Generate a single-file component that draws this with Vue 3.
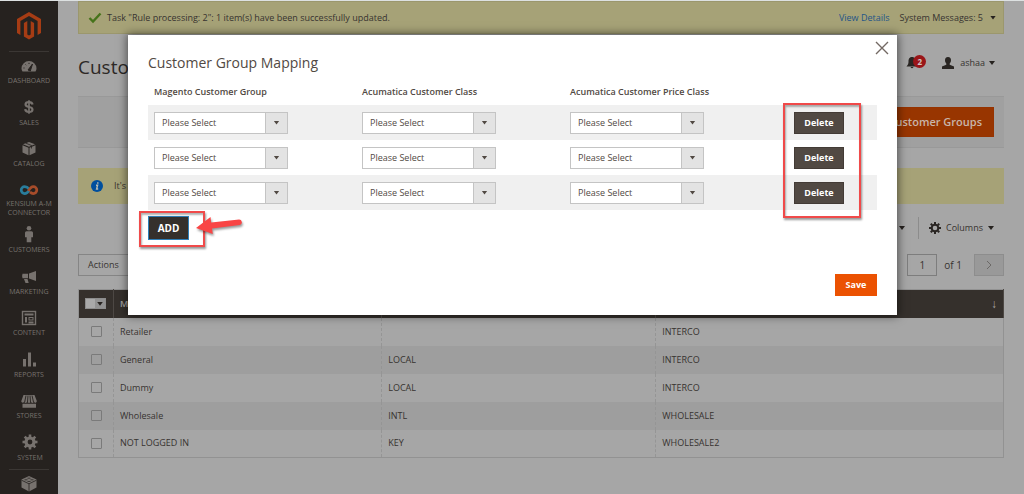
<script setup>
import { ref } from 'vue'

const nav = [
  { id: 'dashboard', label: 'DASHBOARD' },
  { id: 'sales', label: 'SALES' },
  { id: 'catalog', label: 'CATALOG' },
  { id: 'kensium', label: 'KENSIUM A-M CONNECTOR' },
  { id: 'customers', label: 'CUSTOMERS' },
  { id: 'marketing', label: 'MARKETING' },
  { id: 'content', label: 'CONTENT' },
  { id: 'reports', label: 'REPORTS' },
  { id: 'stores', label: 'STORES' },
  { id: 'system', label: 'SYSTEM' },
]

const gearTeeth = [0, 45, 90, 135, 180, 225, 270, 315]

const groups = [
  { name: 'Retailer', cls: '', price: 'INTERCO' },
  { name: 'General', cls: 'LOCAL', price: 'INTERCO' },
  { name: 'Dummy', cls: 'LOCAL', price: 'INTERCO' },
  { name: 'Wholesale', cls: 'INTL', price: 'WHOLESALE' },
  { name: 'NOT LOGGED IN', cls: 'KEY', price: 'WHOLESALE2' },
]

const fields = ['Magento Customer Group', 'Acumatica Customer Class', 'Acumatica Customer Price Class']
const rows = ref([1, 2, 3])
const page = ref('1')
</script>

<template>
  <div class="app">
    <nav class="sidebar">
      <a href="#" class="logo" aria-label="Home">
        <svg width="24" height="28" viewBox="0 0 24 28" fill="#a63c14">
          <path d="M12 0 24 7v14l-3.4 2V9L12 4 3.4 9v14L0 21V7z" />
          <path d="M6.900 11 10.300 9v13.500l1.700 1 1.700-1V9l3.400 2v13.600L12 27.600l-5.100-3z" />
        </svg>
      </a>
      <ul class="menu">
        <li v-for="item in nav" :key="item.id" :class="item.id">
          <a href="#">
            <svg class="icon" width="20" height="20" viewBox="0 0 20 20">
              <g v-if="item.id === 'dashboard'">
                <path d="M3.500 15.500h13q1-1.500 1-3a7.500 7.500 0 0 0-15 0q0 1.500 1 3z" fill="#77726e" />
                <path d="m9 14 4.500-6-2.200 7z" fill="#26221f" stroke="#26221f" />
                <path d="M4.500 12h1M6.500 8.500l.7.7M10 6.800v1.200" stroke="#26221f" />
              </g>
              <g v-else-if="item.id === 'sales'" fill="none" stroke="#77726e" stroke-width="2.200">
                <path d="M13.600 6.600C13.200 4.800 12 4.100 10 4.100c-4.600 0-4.600 4.400 0 4.900 4.800.6 4.500 5-.1 5-2.200 0-3.500-1-3.700-2.800" />
                <path d="M10 2.200v13.600" stroke-width="1.700" />
              </g>
              <g v-else-if="item.id === 'catalog'" fill="#77726e">
                <path d="m10 3 6 2.300-6 2.500-6-2.500z" />
                <path d="m3.500 6.200 6 2.500v7.500l-6-2.700zM16.500 6.200l-6 2.500v7.500l6-2.700z" />
                <path d="m6.500 4 6 2.500v3" fill="none" stroke="#26221f" stroke-width=".8" />
              </g>
              <g v-else-if="item.id === 'kensium'" fill="none" stroke-width="3">
                <path d="M10.500 9.200C9 7.500 7.500 6.200 5.200 6.200a3.900 3.900 0 0 0 0 7.800c2.600 0 4.100-2 5.100-3.400" stroke="#297d9c" />
                <path d="M9.300 11.100c1.300-2.400 2.900-4.900 5.500-4.900a3.900 3.900 0 0 1 0 7.800c-1.500 0-2.700-.7-3.700-1.700" stroke="#a64c2a" />
              </g>
              <g v-else-if="item.id === 'customers'" fill="#77726e">
                <circle cx="10" cy="3.300" r="2.300" />
                <path d="M7.500 6.200h5q1.500 0 1.500 1.500v4.500h-1.700v5h-4.600v-5H6V7.700q0-1.500 1.500-1.500z" />
              </g>
              <g v-else-if="item.id === 'marketing'" fill="#77726e">
                <path d="M17 4v10l-7-2.500V6.600zM9 6.700v4.600H3.500q-.8-2.300 0-4.600zM5 12h3.500l1.200 4H6.500z" />
              </g>
              <g v-else-if="item.id === 'content'" fill="none" stroke="#77726e">
                <rect x="3.500" y="3.500" width="13" height="13" stroke-width="1.400" />
                <path d="M5.500 6.500h9" stroke-width="2" />
                <path d="M7 9v5.500M9.500 14.500h5" stroke-width="2" />
                <rect x="10" y="9.500" width="4" height="2.500" />
              </g>
              <path v-else-if="item.id === 'reports'" d="M4 9h3v7.500H4zM9 2.500h3v14H9zM14 12.500h3v4h-3z" fill="#77726e" />
              <g v-else-if="item.id === 'stores'">
                <path d="M4.500 4h11l2.300 6c0 2.200-2.400 2.200-2.800.8-.7 1.500-2.700 1.500-3.200 0-.7 1.500-2.900 1.500-3.400 0-.7 1.500-2.700 1.500-3.300 0-.5 1.400-3 1.200-2.800-.8zM3.500 12.700h13.500v4H3.500z" fill="#77726e" />
                <path d="M7 4.500 5.700 11M9 4.500 8.500 11M11 4.500l.5 6.500M13 4.500l1.500 6.500" stroke="#26221f" stroke-width=".9" />
              </g>
              <g v-else fill="none" stroke="#77726e">
                <circle cx="10" cy="9" r="4" stroke-width="3.200" />
                <path v-for="a in gearTeeth" :key="a" d="M10 1.500v3" stroke-width="2.600" :transform="`rotate(${a} 10 9)`" />
              </g>
            </svg>
            <span>{{ item.label }}</span>
          </a>
        </li>
      </ul>
      <a href="#" class="partners" aria-label="Extensions">
        <svg width="18" height="16" viewBox="0 0 18 16">
          <path d="m9 0 7.500 3.500v8L9 15.500l-7.500-4v-8z" fill="#77726e" />
          <path d="M1.500 4.200 9 7.800l7.500-3.600M9 7.800v8" fill="none" stroke="#26221f" stroke-width=".8" />
          <path d="M7.500 2.200h3M4.500 3.800h3M10.500 3.800h3M7.500 5.500h3" stroke="#3b3734" />
        </svg>
      </a>
    </nav>

    <main class="main">
      <div class="notice system">
        <svg width="14" height="12" viewBox="0 0 14 12"><path d="m1.500 6 3.500 3.500 7.500-8" fill="none" stroke="#46731a" stroke-width="2.400" /></svg>
        <span>Task "Rule processing: 2": 1 item(s) have been successfully updated.</span>
        <a href="#" class="details">View Details</a>
        <button type="button" class="plain">System Messages: 5 <i class="caret"></i></button>
      </div>

      <header class="page-head">
        <h1>Custo</h1>
        <button type="button" class="plain bell" aria-label="Notifications">
          <svg width="12" height="13" viewBox="0 0 12 13" fill="#2a2623"><path d="M6 1c3 0 3.500 2.500 3.500 4.500S10 9 11.500 10.500H.5C2 9 2.500 7.500 2.500 5.500S3 1 6 1zM4.500 11h3Q6 13.500 4.500 11z" /></svg>
          <span class="badge">2</span>
        </button>
        <button type="button" class="plain user">
          <svg width="14" height="12" viewBox="0 0 14 12" fill="#2a2623"><path d="M7 0c2.200 0 3 1.500 3 3.200C10 5 9.200 5.800 8.700 6.500v1.300L13 9.500V12H1V9.500l4.300-1.700V6.500C4.800 5.800 4 5 4 3.200 4 1.500 4.800 0 7 0z" /></svg>
          ashaa <i class="caret"></i>
        </button>
      </header>

      <div class="actions-bar">
        <button type="button" class="primary">Customer Groups</button>
      </div>

      <div class="notice info">
        <svg width="12" height="12" viewBox="0 0 12 12"><circle cx="6" cy="6" r="6" fill="#004f9e" /><path d="M6.800 2.200v1.500M5 5.200h1.600L5.600 9h1.600" fill="none" stroke="#b9bcb2" stroke-width="1.400" /></svg>
        <span>It's</span>
      </div>

      <div class="grid-tools">
        <i class="caret"></i>
        <button type="button" class="plain columns">
          <svg width="12" height="12" viewBox="0 0 12 12" fill="none" stroke="#2a2623">
            <circle cx="6" cy="6" r="3.300" stroke-width="2" />
            <path v-for="a in gearTeeth" :key="a" d="M6 0v2.200" stroke-width="2" :transform="`rotate(${a} 6 6)`" />
          </svg>
          Columns <i class="caret"></i>
        </button>
      </div>

      <div class="grid-pager">
        <button type="button" class="mass">Actions</button>
        <input v-model="page" type="text" class="page-no" aria-label="Page" />
        <span class="of">of 1</span>
        <button type="button" class="next" aria-label="Next page">
          <svg width="6" height="10" viewBox="0 0 6 10"><path d="m1 1 4 4-4 4" fill="none" stroke="#6b6866" /></svg>
        </button>
      </div>

      <table class="grid">
        <colgroup><col class="g-check" /><col class="g-name" /><col class="g-class" /><col /></colgroup>
        <thead>
          <tr>
            <th><button type="button" class="multi" aria-label="Select rows"><i class="caret"></i></button></th>
            <th>M</th>
            <th></th>
            <th class="sorted">↓</th>
          </tr>
        </thead>
        <tbody>
          <tr v-for="g in groups" :key="g.name">
            <td class="check"><input type="checkbox" :aria-label="g.name" /></td>
            <td>{{ g.name }}</td>
            <td>{{ g.cls }}</td>
            <td>{{ g.price }}</td>
          </tr>
        </tbody>
      </table>
    </main>

    <section class="modal" role="dialog" aria-labelledby="modal-title">
      <button type="button" class="close" aria-label="Close">
        <svg width="14" height="14" viewBox="0 0 14 14"><path d="m1 1 12 12M13 1 1 13" stroke="#736963" stroke-width="1.400" /></svg>
      </button>
      <h2 id="modal-title">Customer Group Mapping</h2>
      <table class="mapping">
        <colgroup><col class="m-a" /><col class="m-a" /><col class="m-b" /><col /></colgroup>
        <thead>
          <tr><th v-for="f in fields" :key="f">{{ f }}</th><th></th></tr>
        </thead>
        <tbody>
          <tr v-for="r in rows" :key="r">
            <td v-for="f in fields" :key="f">
              <span class="select">
                <select :aria-label="f"><option>Please Select</option></select>
                <span class="arrow"><i class="caret"></i></span>
              </span>
            </td>
            <td><button type="button" class="delete">Delete</button></td>
          </tr>
        </tbody>
      </table>
      <button type="button" class="add">ADD</button>
      <footer><button type="button" class="save">Save</button></footer>

      <div class="mark mark-delete"></div>
      <div class="mark mark-add"></div>
      <svg class="pointer" width="52" height="24" viewBox="0 0 52 24"><path d="M2 13 16.500 2l.7 5.500L45 4.500a2.800 2.800 0 0 1 .8 5.500L18 13.500l.8 5.500z" fill="#f94545" /></svg>
    </section>
  </div>
</template>

<style>
html, body { background: #a6a6a6; }
</style>

<style scoped>
* { box-sizing: border-box; }
.app {
  position: relative;
  display: flex;
  min-height: 100vh;
  overflow: hidden;
  border-top: 1px solid #dde1e1;
  background: #a6a6a6;
  color: #373330;
  font: 9px/14px "Open Sans", "Noto Sans", sans-serif;
}
button, input, select { font: inherit; color: inherit; border-radius: 0; margin: 0; }
a { text-decoration: none; color: inherit; }
.caret {
  display: inline-block;
  width: 6px;
  height: 4px;
  background: #26221f;
  clip-path: polygon(0 0, 100% 0, 50% 100%);
}
.plain { border: 0; background: none; padding: 0; display: flex; align-items: center; }

.sidebar { flex: 0 0 58px; background: #26221f; color: #77726e; height: calc(100vh - 1px); overflow: hidden; }
.logo { display: flex; justify-content: center; align-items: center; height: 51px; margin: 0 9px; border-bottom: 1px solid #3b3734; }
.menu { list-style: none; margin: 0 9px; padding: 4px 0 0; border-bottom: 1px solid #3b3734; }
.menu li { height: 42px; font-size: 7px; line-height: 9px; text-align: center; }
.menu li:nth-child(even) { height: 41px; }
.menu li.kensium { height: 44px; }
.menu li.kensium .icon { height: 18px; }
.menu li.system { height: 36px; }
.menu a { display: flex; flex-direction: column; align-items: center; margin: 0 -8px; }
.menu .icon { display: block; height: 20px; }
.partners { display: flex; justify-content: center; padding-top: 6px; }

.main { flex: 1; min-width: 0; padding: 0 20px; }
.notice { display: flex; align-items: center; background: #a6a277; border: 1px solid #9b976d; }
.system { height: 33px; padding: 0 7px 0 9px; gap: 5px; }
.details { margin-left: auto; margin-right: 5px; color: #1f5588; }
.system .caret { margin-left: 7px; }
.page-head { display: flex; align-items: center; height: 62px; }
h1 { margin: 4px auto 0 0; font-size: 19px; line-height: 26px; font-weight: 400; color: #2d2926; }
.bell { position: relative; margin: -6px 15px 0 0; width: 20px; }
.badge { position: absolute; left: 7px; top: -1px; width: 13px; height: 13px; border-radius: 50%; background: #9a1518; color: #cfc6c6; font-size: 8px; line-height: 13px; font-weight: 700; }
.user { gap: 5px; margin: -4px 9px 0 0; }
.actions-bar { display: flex; justify-content: flex-end; align-items: center; height: 52px; padding: 0 10px; background: #a0a0a0; border: 1px solid #999; border-width: 1px 0; }
.user .caret { margin-left: -1px; }
.primary { height: 30px; padding: 0 11px; border: 1px solid #963300; background: #983500; color: #c8b5aa; font-size: 11px; font-weight: 600; }
.info { height: 36px; margin-top: 20px; padding: 0 12px; gap: 11px; border-color: #a6a277; }
.grid-tools { display: flex; justify-content: flex-end; align-items: center; height: 22px; margin-top: 13px; gap: 13px; }
.columns { height: 22px; padding: 0 10px; gap: 5px; border-left: 1px solid #8c8c8c; }
.grid-pager { display: flex; align-items: center; height: 22px; margin: 15px 0 13px; font-size: 10px; }
.mass { width: 80px; height: 22px; padding: 0 9px; text-align: left; background: none; border: 1px solid #858585; margin-right: auto; font-size: 9px; }
.page-no { width: 30px; height: 22px; padding: 0; text-align: center; background: #a6a6a6; border: 1px solid #7d7d7d; }
.of { margin: 0 12px 0 7px; }
.next { width: 30px; height: 22px; padding: 0; display: grid; place-items: center; background: #999; border: 1px solid #8d8d8d; }

table { width: 100%; table-layout: fixed; border-collapse: collapse; }
.grid { border: 1px solid #929292; }
.g-check { width: 35px; }
.g-name { width: 29%; }
.g-class { width: 274px; }
.grid th { height: 28px; padding: 0 6px; text-align: left; background: #35302c; color: #a9a5a3; font-weight: 600; border-right: 1px solid #4d4844; }
.grid td { height: 28px; padding: 0 6px; border-right: 1px dashed #959595; }
.grid tbody tr:nth-child(even) { background: #9e9e9e; }
.grid .sorted { text-align: right; font-size: 12px; }
.grid .check { padding: 0; text-align: center; }
.check input { appearance: none; display: block; width: 11px; height: 11px; margin: 0 auto; border: 1px solid #7a7a7a; border-radius: 1px; }
.multi { display: flex; align-items: center; justify-content: flex-end; width: 21px; height: 11px; padding: 0 2px 0 0; border: 1px solid #8d8d8d; background: linear-gradient(90deg, #a9a9a9 50%, #929292 50%); }

.modal { position: absolute; top: 34px; left: 128px; right: 127px; padding: 18px 20px 19px; background: #fff; color: #514943; box-shadow: 0 0 9px 1px rgba(0, 0, 0, .55); }
.close { position: absolute; top: 6px; right: 8px; padding: 0; border: 0; background: none; display: flex; }
h2 { margin: 0; font-size: 14px; line-height: 20px; font-weight: 400; }
.mapping { margin-top: 6px; }
.m-a { width: 208px; }
.m-b { width: 224px; }
.mapping th { height: 26px; padding: 0 6px; text-align: left; font-weight: 600; }
.mapping td { height: 35px; padding: 0 6px; }
.mapping tbody tr:nth-child(odd) { background: #f0f0f0; }
.select { position: relative; display: block; width: 134px; height: 22px; }
select { appearance: none; width: 100%; height: 22px; padding: 0 30px 0 7px; border: 1px solid #c4c4c4; background: #fff; }
.arrow { position: absolute; top: 0; right: 0; width: 23px; height: 22px; display: grid; place-items: center; border: 1px solid #c4c4c4; background: #e3e3e3; pointer-events: none; }
.arrow .caret { background: #514943; }
.delete { display: block; width: 50px; height: 22px; padding: 0; border: 1px solid #433b36; background: #514943; color: #fff; font-weight: 700; }
.add { display: block; width: 41px; height: 24px; margin-top: 6px; padding: 0; border: 1px solid #2f7fb8; background: #35302c; color: #fff; font-size: 10px; font-weight: 700; }
.modal footer { display: flex; justify-content: flex-end; margin-top: 34px; }
.save { width: 42px; height: 22px; padding: 0; border: 1px solid #eb5202; background: #eb5202; color: #fff; font-weight: 700; }
.mark { position: absolute; border: 2px solid #f04a4a; box-shadow: 1px 2px 2px rgba(0, 0, 0, .4), inset 1px 2px 2px rgba(0, 0, 0, .3); pointer-events: none; }
.mark-delete { top: 68px; right: 36px; width: 78px; height: 115px; }
.mark-add { top: 176px; left: 11px; width: 66px; height: 36px; }
.pointer { position: absolute; top: 180px; left: 66px; filter: drop-shadow(1px 2px 1px rgba(0, 0, 0, .4)); pointer-events: none; }
</style>
